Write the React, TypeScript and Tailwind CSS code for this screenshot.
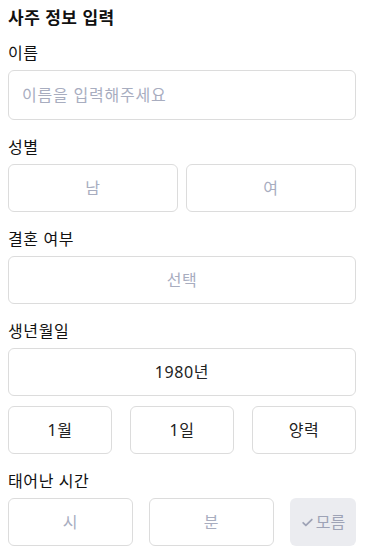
import React from "react";

const font = { fontFamily: '"Noto Sans", "Noto Sans CJK KR", sans-serif' };

function Label({ children }: { children: React.ReactNode }) {
  return <p className="text-[16px] leading-[20px] tracking-[0.6px] text-[#111] mb-[7px]">{children}</p>;
}

function Box({ children, muted = false, className = "" }: { children: React.ReactNode; muted?: boolean; className?: string }) {
  return (
    <div
      className={`h-12 flex items-center justify-center rounded-md border border-[#dcdcdc] bg-white text-[16px] tracking-[0.6px] ${
        muted ? "text-[#a8adbf]" : "text-[#222]"
      } ${className}`}
    >
      {children}
    </div>
  );
}

export default function App(): React.JSX.Element {
  return (
    <div style={font} className="w-[371px] h-[556px] bg-white pl-2 pr-[15px] pt-[6px] overflow-hidden">
      <h1 className="text-[17px] leading-[24px] font-bold tracking-[0.5px] text-[#111] mb-[13px]">사주 정보 입력</h1>

      <section>
        <Label>이름</Label>
        <div className="h-[50px] flex items-center rounded-md border border-[#dcdcdc] px-[13px] text-[16px] tracking-[0.8px] text-[#a8adbf]">
          이름을 입력해주세요
        </div>
      </section>

      <section className="mt-[17px]">
        <Label>성별</Label>
        <div className="grid grid-cols-2 gap-2">
          <Box muted>남</Box>
          <Box muted>여</Box>
        </div>
      </section>

      <section className="mt-[17px]">
        <Label>결혼 여부</Label>
        <Box muted>선택</Box>
      </section>

      <section className="mt-[17px]">
        <Label>생년월일</Label>
        <Box>1980년</Box>
        <div className="grid grid-cols-3 gap-[18px] mt-[10px]">
          <Box>1월</Box>
          <Box>1일</Box>
          <Box>양력</Box>
        </div>
      </section>

      <section className="mt-[17px]">
        <Label>태어난 시간</Label>
        <div className="flex gap-4">
          <Box muted className="flex-1">시</Box>
          <Box muted className="flex-1">분</Box>
          <div className="w-[66px] h-12 flex items-center justify-center gap-[2px] rounded-md bg-[#ebecf0] text-[16px] text-[#9ea3b6]">
            <svg width="13" height="13" viewBox="0 0 24 24" fill="none" stroke="#9ea3b6" strokeWidth="3.2" strokeLinecap="round" strokeLinejoin="round">
              <path d="M4 12.5l5 5L20 6.5" />
            </svg>
            <span>모름</span>
          </div>
        </div>
      </section>
    </div>
  );
}
